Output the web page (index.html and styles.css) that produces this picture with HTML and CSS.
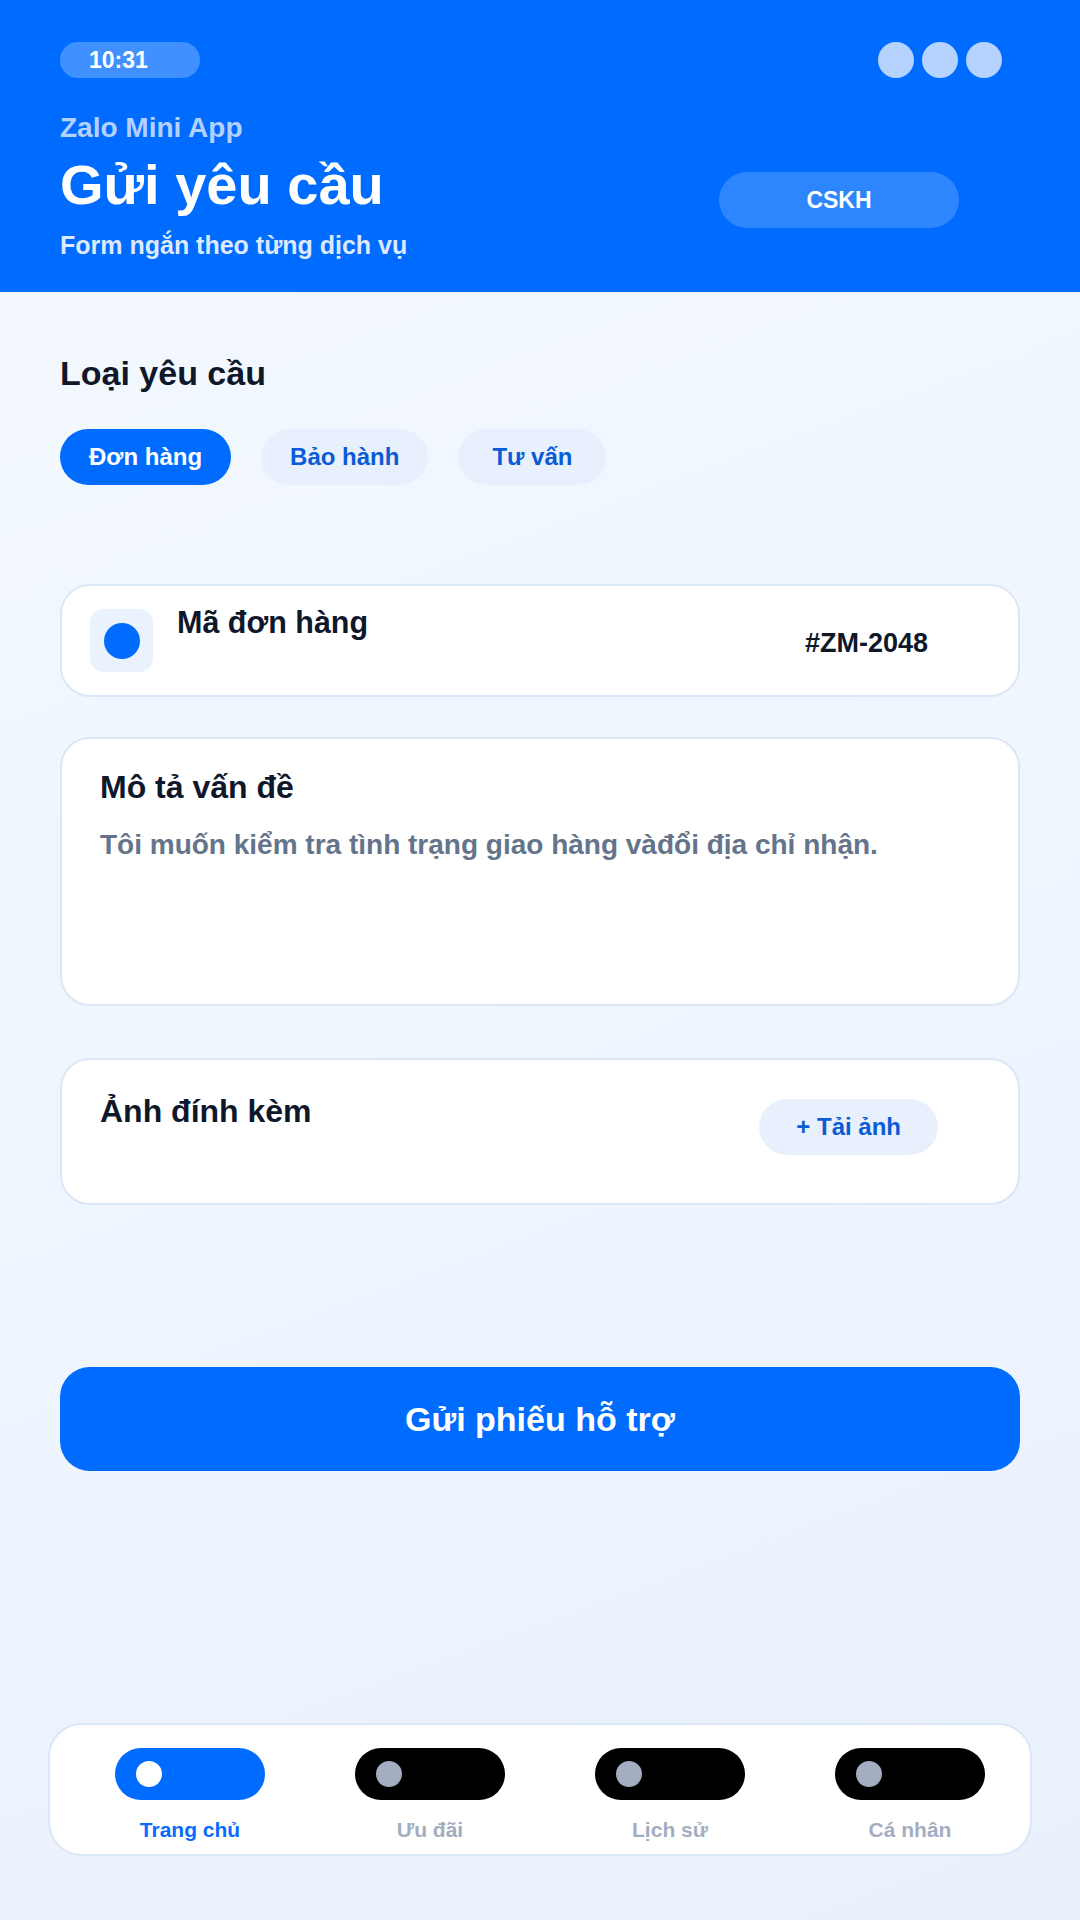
FILE: index.html
```html
<!DOCTYPE html>
<html lang="vi">
<head>
  <meta charset="UTF-8">
  <meta name="viewport" content="width=device-width, initial-scale=1.0">
  <title>Gửi yêu cầu</title>
  <link rel="stylesheet" href="styles.css">
</head>
<body>
  <div class="screen">
    <!-- Header -->
    <header class="app-header">
      <div class="status-row">
        <span class="time-pill">10:31</span>
        <div class="dots"><span></span><span></span><span></span></div>
      </div>
      <div class="header-row">
        <div class="header-text">
          <p class="app-name">Zalo Mini App</p>
          <h1 class="page-title">Gửi yêu cầu</h1>
          <p class="page-sub">Form ngắn theo từng dịch vụ</p>
        </div>
        <button class="support-btn">CSKH</button>
      </div>
    </header>

    <main class="content">
      <h2 class="section-title">Loại yêu cầu</h2>
      <div class="chips">
        <button class="chip active">Đơn hàng</button>
        <button class="chip">Bảo hành</button>
        <button class="chip">Tư vấn</button>
      </div>

      <!-- Order code -->
      <div class="card order-card">
        <div class="order-icon"><span></span></div>
        <div class="order-label">Mã đơn hàng</div>
        <div class="order-value">#ZM-2048</div>
      </div>

      <!-- Description -->
      <div class="card desc-card">
        <div class="card-title">Mô tả vấn đề</div>
        <p class="desc-text">Tôi muốn kiểm tra tình trạng giao hàng vàđổi địa chỉ nhận.</p>
      </div>

      <!-- Attachments -->
      <div class="card attach-card">
        <div class="card-title">Ảnh đính kèm</div>
        <button class="upload-btn">+ Tải ảnh</button>
      </div>

      <button class="submit-btn">Gửi phiếu hỗ trợ</button>
    </main>

    <!-- Bottom tabs -->
    <nav class="tab-bar">
      <div class="tab active">
        <span class="tab-pill"><span class="tab-dot"></span></span>
        <span class="tab-label">Trang chủ</span>
      </div>
      <div class="tab">
        <span class="tab-pill"><span class="tab-dot"></span></span>
        <span class="tab-label">Ưu đãi</span>
      </div>
      <div class="tab">
        <span class="tab-pill"><span class="tab-dot"></span></span>
        <span class="tab-label">Lịch sử</span>
      </div>
      <div class="tab">
        <span class="tab-pill"><span class="tab-dot"></span></span>
        <span class="tab-label">Cá nhân</span>
      </div>
    </nav>
  </div>
</body>
</html>
```

FILE: styles.css
```css
body {
  margin: 0;
  padding: 0;
  font-family: "Liberation Sans", Arial, sans-serif;
  font-weight: bold;
  color: #0f172a;
}

.screen {
  height: 1920px;
  display: flex;
  flex-direction: column;
  background: linear-gradient(160deg, #f4f9ff 0%, #eff5fe 60%, #e8f0fc 100%);
}

button {
  font-family: inherit;
  font-weight: bold;
  border: none;
  cursor: pointer;
}

/* Header */
.app-header {
  background-color: #006cff;
  padding: 42px 60px 33px;
  color: #fff;
}

.status-row {
  display: flex;
  justify-content: space-between;
  align-items: center;
  height: 36px;
}

.time-pill {
  width: 140px;
  height: 36px;
  box-sizing: border-box;
  padding-left: 29px;
  border-radius: 18px;
  background-color: #4090ff;
  font-size: 23px;
  line-height: 36px;
}

.dots {
  display: flex;
  gap: 8px;
  margin-right: 18px;
}

.dots span {
  width: 36px;
  height: 36px;
  border-radius: 50%;
  background-color: #b6d3ff;
}

.header-row {
  display: flex;
  justify-content: space-between;
  align-items: flex-start;
  margin-top: 34px;
}

.app-name {
  margin: 0;
  font-size: 28px;
  line-height: 31px;
  color: #b3d1ff;
}

.page-title {
  margin: 11px 0 0;
  font-size: 56px;
  line-height: 62px;
}

.page-sub {
  margin: 15px 0 0;
  font-size: 25px;
  line-height: 28px;
  color: #dde9ff;
}

.support-btn {
  width: 240px;
  height: 56px;
  margin: 60px 61px 0 0;
  border-radius: 28px;
  background-color: #2e86ff;
  color: #fff;
  font-size: 23px;
}

/* Content */
.content {
  padding: 0 60px;
  display: flex;
  flex-direction: column;
}

.section-title {
  margin: 62px 0 0;
  font-size: 34px;
  line-height: 38px;
}

.chips {
  display: flex;
  gap: 30px;
  margin-top: 37px;
}

.chip {
  height: 56px;
  min-width: 148px;
  padding: 0 29px;
  border-radius: 28px;
  background-color: #e8f0fd;
  color: #0b5bd6;
  font-size: 24px;
}

.chip.active {
  background-color: #006cff;
  color: #fff;
}

.card {
  background-color: #fff;
  border: 2px solid #dbe6f7;
  border-radius: 30px;
  box-sizing: border-box;
}

.order-card {
  margin-top: 99px;
  height: 113px;
  padding: 23px 28px;
  display: flex;
  align-items: flex-start;
}

.order-icon {
  width: 63px;
  height: 63px;
  border-radius: 14px;
  background-color: #eaf2fe;
  display: flex;
  align-items: center;
  justify-content: center;
  flex-shrink: 0;
}

.order-icon span {
  width: 36px;
  height: 36px;
  border-radius: 50%;
  background-color: #006cff;
}

.order-label {
  margin: -4px 0 0 24px;
  font-size: 30.5px;
  line-height: 35px;
}

.order-value {
  margin: 0 62px 0 auto;
  align-self: center;
  padding-top: 6px;
  font-size: 27px;
}

.card-title {
  font-size: 32px;
  line-height: 37px;
}

.desc-card {
  margin-top: 40px;
  height: 269px;
  padding: 30px 38px;
}

.desc-text {
  margin: 23px 0 0;
  font-size: 28px;
  line-height: 32px;
  color: #64748b;
}

.attach-card {
  margin-top: 52px;
  height: 147px;
  padding: 33px 80px 0 38px;
  display: flex;
  justify-content: space-between;
  align-items: flex-start;
}

.upload-btn {
  margin-top: 6px;
  height: 56px;
  padding: 0 37px;
  border-radius: 28px;
  background-color: #e8f0fd;
  color: #0b5bd6;
  font-size: 24px;
}

.submit-btn {
  margin-top: 162px;
  height: 104px;
  border-radius: 30px;
  background-color: #006cff;
  color: #fff;
  font-size: 34px;
}

/* Bottom tab bar */
.tab-bar {
  margin: auto 48px 64px;
  height: 133px;
  box-sizing: border-box;
  padding: 23px 0 12px 20px;
  background-color: #fff;
  border: 2px solid #dbe6f7;
  border-radius: 34px;
  display: grid;
  grid-template-columns: repeat(4, 1fr);
}

.tab {
  display: flex;
  flex-direction: column;
  align-items: center;
}

.tab-pill {
  width: 150px;
  height: 52px;
  border-radius: 26px;
  background-color: #000;
  display: flex;
  align-items: center;
  padding-left: 21px;
  box-sizing: border-box;
}

.tab-dot {
  width: 26px;
  height: 26px;
  border-radius: 50%;
  background-color: #a3adc2;
}

.tab-label {
  margin-top: 18px;
  font-size: 21px;
  line-height: 24px;
  color: #a4adbf;
}

.tab.active .tab-pill {
  background-color: #006cff;
}

.tab.active .tab-dot {
  background-color: #fff;
}

.tab.active .tab-label {
  color: #0b6bff;
}
```
